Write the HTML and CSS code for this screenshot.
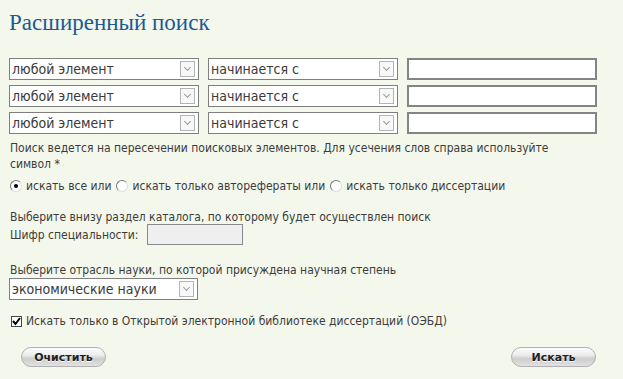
FILE: index.html
```html
<!DOCTYPE html>
<html>
<head>
<meta charset="utf-8">
<link rel="stylesheet" href="styles.css">
</head>
<body>
<div class="page">
  <h1 class="title">Расширенный поиск</h1>
  <div class="rows">
    <div class="row">
      <div class="sel w190"><span>любой элемент</span><i class="arr"></i></div>
      <div class="sel w190"><span>начинается с</span><i class="arr"></i></div>
      <div class="inp"></div>
    </div>
    <div class="row">
      <div class="sel w190"><span>любой элемент</span><i class="arr"></i></div>
      <div class="sel w190"><span>начинается с</span><i class="arr"></i></div>
      <div class="inp"></div>
    </div>
    <div class="row">
      <div class="sel w190"><span>любой элемент</span><i class="arr"></i></div>
      <div class="sel w190"><span>начинается с</span><i class="arr"></i></div>
      <div class="inp"></div>
    </div>
  </div>
  <p class="note">Поиск ведется на пересечении поисковых элементов. Для усечения слов справа используйте символ *</p>
  <div class="radios">
    <span class="radio on"></span><span>искать все или</span>
    <span class="radio"></span><span>искать только авторефераты или</span>
    <span class="radio"></span><span>искать только диссертации</span>
  </div>
  <p class="line1">Выберите внизу раздел каталога, по которому будет осуществлен поиск</p>
  <div class="cipher"><span>Шифр специальности:</span><div class="cinp"></div></div>
  <p class="line2">Выберите отрасль науки, по которой присуждена научная степень</p>
  <div class="sel w189"><span>экономические науки</span><i class="arr"></i></div>
  <div class="check"><span class="cb"><svg width="9" height="9" viewBox="0 0 9 9"><path d="M1 4 L3.5 7 L8 1" fill="none" stroke="#000" stroke-width="2"/></svg></span><span>Искать только в Открытой электронной библиотеке диссертаций (ОЭБД)</span></div>
  <div class="buttons">
    <button class="btn">Очистить</button>
    <button class="btn">Искать</button>
  </div>
</div>
</body>
</html>
```
FILE: styles.css
```css
html, body { margin: 0; padding: 0; }
body {
  background: #f4f8ec;
  font-family: "DejaVu Sans Condensed", "DejaVu Sans", sans-serif;
  font-size: 12px;
  color: #3c3c3c;
  width: 623px;
  height: 379px;
  overflow: hidden;
}
.page { padding: 0 9px 0 9px; }
.title {
  margin: 0;
  padding-top: 9px;
  height: 58px;
  box-sizing: border-box;
  font-family: "Liberation Serif", serif;
  font-weight: normal;
  font-size: 23px;
  line-height: 28px;
  color: #1b5a92;
}
.rows { display: flex; flex-direction: column; gap: 5px; }
.row { display: flex; gap: 9px; }
.sel {
  height: 22px;
  box-sizing: border-box;
  border: 1px solid #7f7f7f;
  background: #fff;
  display: flex;
  align-items: center;
  justify-content: space-between;
  padding: 0 3px 0 2px;
  color: #3a3a3a;
  font-family: "DejaVu Sans Condensed", "DejaVu Sans", sans-serif;
  font-size: 14px;
}
.w190 { width: 190px; }
.w189 { width: 189px; }
.arr {
  width: 15px;
  height: 16px;
  box-sizing: border-box;
  border: 1px solid #b4b4b4;
  background: #f8f8f8;
  position: relative;
}
.arr::after {
  content: "";
  position: absolute;
  left: 4px;
  top: 3px;
  width: 4px;
  height: 4px;
  border-right: 1px solid #9a9a9a;
  border-bottom: 1px solid #9a9a9a;
  transform: rotate(45deg);
}
.inp {
  width: 190px;
  height: 22px;
  box-sizing: border-box;
  border: 2px solid #848484;
  background: #fff;
}
.note { margin: 6px 1px 0; line-height: 16px; width: 580px; }
.radios { display: flex; align-items: center; margin-top: 6px; height: 16px; }
.radios span { margin-right: 4px; }
.radio {
  width: 10px; height: 10px; border-radius: 50%;
  background: #fff;
  border-top: 1px solid #777;
  border-left: 1px solid #777;
  border-right: 1px solid #ddd;
  border-bottom: 1px solid #ddd;
  display: inline-block;
  position: relative;
  margin-left: 1px;
}
.radio.on::after {
  content: ""; position: absolute; left: 3px; top: 3px;
  width: 4px; height: 4px; border-radius: 50%; background: #000;
}
.line1 { margin: 15px 1px 0; line-height: 17px; }
.cipher { display: flex; align-items: center; gap: 8px; margin: -2px 1px 0; }
.cinp {
  width: 96px; height: 21px; box-sizing: border-box;
  border: 1px solid #8a8a8a; background: #efefef;
}
.line2 { margin: 17px 1px 0; line-height: 17px; }
.line2 + .sel { margin-top: -1px; }
.check { display: flex; align-items: center; margin: 14px 2px 0; gap: 4px; }
.cb {
  width: 11px; height: 11px; box-sizing: border-box;
  border: 1px solid #444; background: #fff;
  display: inline-flex; align-items: center; justify-content: center;
}
.cb svg { width: 9px; height: 9px; }
.buttons { display: flex; justify-content: space-between; margin-top: 19px; padding: 0 18px 0 12px; }
.btn {
  width: 85px;
  height: 20px;
  border-radius: 10px;
  border: 1px solid #b0b0b0;
  background: linear-gradient(#fdfdfd 0%, #ececec 40%, #cdcdcd 60%, #e2e2e2 100%);
  font-family: "DejaVu Sans", sans-serif;
  font-weight: bold;
  font-size: 11px;
  color: #222;
  text-shadow: 0 1px 0 #fff;
  padding: 0;
}
```
